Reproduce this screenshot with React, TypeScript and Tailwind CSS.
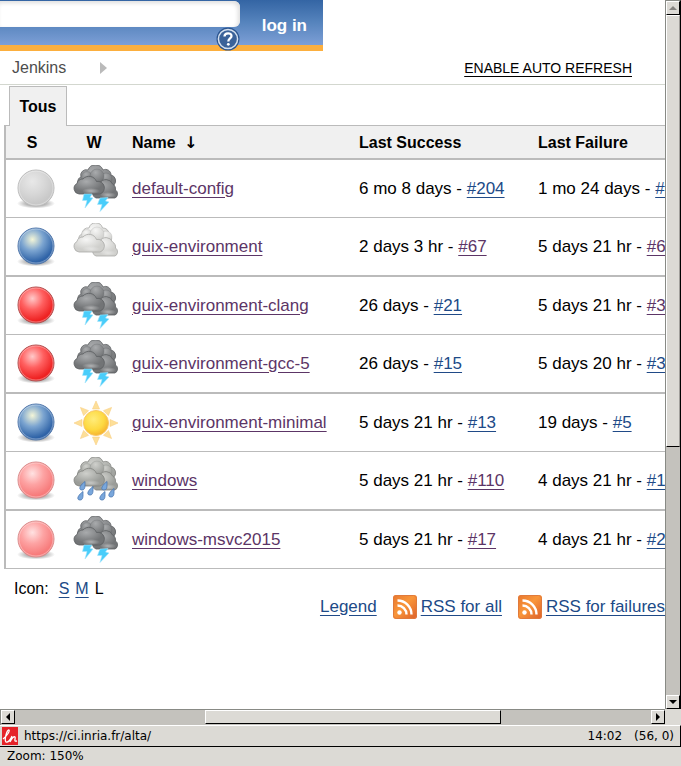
import React from "react";

type Weather = "storm" | "cloudy" | "sunny" | "rain";
type Ball = "grey" | "blue" | "red" | "pink";
type Build = { age: string; id: string; visited?: boolean };
type Job = { name: string; ball: Ball; weather: Weather; success: Build; failure: Build };

const jobs: Job[] = [
  { name: "default-config", ball: "grey", weather: "storm", success: { age: "6 mo 8 days", id: "#204" }, failure: { age: "1 mo 24 days", id: "#203" } },
  { name: "guix-environment", ball: "blue", weather: "cloudy", success: { age: "2 days 3 hr", id: "#67", visited: true }, failure: { age: "5 days 21 hr", id: "#65", visited: true } },
  { name: "guix-environment-clang", ball: "red", weather: "storm", success: { age: "26 days", id: "#21" }, failure: { age: "5 days 21 hr", id: "#39", visited: true } },
  { name: "guix-environment-gcc-5", ball: "red", weather: "storm", success: { age: "26 days", id: "#15" }, failure: { age: "5 days 20 hr", id: "#33" } },
  { name: "guix-environment-minimal", ball: "blue", weather: "sunny", success: { age: "5 days 21 hr", id: "#13" }, failure: { age: "19 days", id: "#5" } },
  { name: "windows", ball: "pink", weather: "rain", success: { age: "5 days 21 hr", id: "#110", visited: true }, failure: { age: "4 days 21 hr", id: "#111" } },
  { name: "windows-msvc2015", ball: "pink", weather: "storm", success: { age: "5 days 21 hr", id: "#17", visited: true }, failure: { age: "4 days 21 hr", id: "#20" } },
];

const ballColors: Record<Ball, [string, string, string, string]> = {
  grey: ["#e8e8e8", "#d9d9d9", "#c8c8c8", "#bcbcbc"],
  blue: ["#f4f6d8", "#7ba4d0", "#2f63a7", "#5379ac"],
  red: ["#ffc9c9", "#ff6060", "#ee2222", "#b05050"],
  pink: ["#ffe2e2", "#fda3a3", "#f77b7b", "#d98c8c"],
};

function StatusBall({ color }: { color: Ball }) {
  const [hi, mid, low, edge] = ballColors[color];
  const id = React.useId();
  return (
    <svg viewBox="0 0 48 48" className="mx-auto block size-12" role="img" aria-label={color}>
      <defs>
        <radialGradient id={id} cx="0.4" cy="0.32" r="0.62">
          <stop offset="0" stopColor={hi} />
          <stop offset="0.5" stopColor={mid} />
          <stop offset="1" stopColor={low} />
        </radialGradient>
        <radialGradient id={id + "s"}>
          <stop offset="0.4" stopColor="#000" stopOpacity="0.35" />
          <stop offset="1" stopColor="#000" stopOpacity="0" />
        </radialGradient>
      </defs>
      <ellipse cx="24" cy="38.5" rx="19" ry="5" fill={`url(#${id}s)`} />
      <circle cx="24" cy="23" r="18" fill={`url(#${id})`} stroke={edge} strokeWidth="1" />
      <circle cx="24" cy="23" r="17" fill="none" stroke="#fff" strokeOpacity="0.35" />
    </svg>
  );
}

const cloudColors = {
  storm: ["#a9abad", "#727476", "#5c5e61"],
  cloudy: ["#f6f6f5", "#cfcfcc", "#a9a9a7"],
  rain: ["#cfd0cc", "#9a9c98", "#80827e"],
};

function Clouds({ kind }: { kind: "storm" | "cloudy" | "rain" }) {
  const [hi, low, edge] = cloudColors[kind];
  const id = React.useId();
  return (
    <>
      <defs>
        <radialGradient id={id} cx="0.4" cy="0.25" r="0.75">
          <stop offset="0" stopColor={hi} />
          <stop offset="1" stopColor={low} />
        </radialGradient>
        <radialGradient id={id + "f"} cx="0.4" cy="0.3" r="0.7">
          <stop offset="0" stopColor={hi} />
          <stop offset="0.8" stopColor={low} />
          <stop offset="1" stopColor={low} />
        </radialGradient>
        <radialGradient id={id + "g"}>
          <stop offset="0" stopColor="#fff" stopOpacity="0.45" />
          <stop offset="1" stopColor="#fff" stopOpacity="0" />
        </radialGradient>
      </defs>
      <g stroke={edge} strokeWidth="0.8">
        {kind === "cloudy" ? (
          <path d="M9 20 A5 5 0 0 1 10 11 A6 6 0 0 1 17 5 A7 7 0 0 1 30.500 5 A6 6 0 0 1 37 11 A6 6 0 0 1 38 20 L36 24 H12 Z" fill={`url(#${id})`} />
        ) : (
          <path d="M8 21 A5 5 0 0 1 9 12 A5.500 5.500 0 0 1 16 5 A8 8 0 0 1 31 5 A5.500 5.500 0 0 1 39 10 A6 6 0 0 1 42 20 L40 28 H12 Z" fill={`url(#${id})`} />
        )}
        <circle cx="15" cy="12" r="5.500" fill={`url(#${id})`} strokeOpacity="0.35" />
        <circle cx="34" cy="14" r="6" fill={`url(#${id})`} strokeOpacity="0.35" />
        <circle cx="25" cy="11" r="7" fill={`url(#${id})`} strokeOpacity="0.35" />
        <path d="M24 33 A5 5 0 0 1 23 24 A6 6 0 0 1 28 18 A7 7 0 0 1 40.500 19 A6 6 0 0 1 43.500 25 A4.600 4.600 0 0 1 43 33 Z" fill={`url(#${id}f)`} />
        <path d="M7 29 A5.600 5.600 0 0 1 5 18.500 A5.500 5.500 0 0 1 11 14 A8 8 0 0 1 24.500 16.500 A6.500 6.500 0 0 1 28 29 Z" fill={`url(#${id}f)`} />
      </g>
      <ellipse cx="19" cy="26" rx="9" ry="3" fill={`url(#${id}g)`} />
      <ellipse cx="36" cy="30" rx="8" ry="3" fill={`url(#${id}g)`} />
    </>
  );
}

function WeatherIcon({ kind }: { kind: Weather }) {
  return (
    <svg viewBox="0 0 48 48" className="mx-auto block size-12" role="img" aria-label={kind}>
      {kind === "sunny" ? (
        <>
          <defs>
            <radialGradient id="sun" cx="0.4" cy="0.35" r="0.7">
              <stop offset="0" stopColor="#ffec7a" />
              <stop offset="0.6" stopColor="#fdd941" />
              <stop offset="1" stopColor="#f5ad2c" />
            </radialGradient>
          </defs>
          {[0, 45, 90, 135, 180, 225, 270, 315].map((a) => (
            <path key={a} d="M24 2 L27.500 10 H20.500 Z" fill="#fddf98" stroke="#f8cf85" strokeWidth="0.6" transform={`rotate(${a} 24 24)`} />
          ))}
          <circle cx="24" cy="24" r="12.500" fill="url(#sun)" stroke="#f9c765" />
        </>
      ) : (
        <Clouds kind={kind} />
      )}
      {kind === "storm" && (
        <g fill="#49cdfa" stroke="#a5e4fb" strokeWidth="0.6">
          <path d="M12 29 L20 29 L18 32.500 L21 33 L13 43 L15 35.500 L10.500 35.500 Z" />
          <path d="M28 33 L36 32.500 L33.500 36 L37 37 L28 46.500 L30 39.500 L25.500 39.500 Z" />
        </g>
      )}
      {kind === "rain" && (
        <g fill="#79a7dc" stroke="#4a76b0" strokeWidth="0.8">
          {[[10, 29], [18, 34], [8, 39], [32, 29], [39, 36], [30, 39]].map(([x, y]) => (
            <path key={`${x}-${y}`} d="M3 -4.500 C3 0 3.500 4 0 4 C-3.500 4 -3 0 3 -4.500 Z" transform={`translate(${x} ${y})`} />
          ))}
        </g>
      )}
    </svg>
  );
}

function RssIcon() {
  return (
    <svg viewBox="0 0 24 24" className="size-6 shrink-0" aria-hidden="true">
      <defs>
        <linearGradient id="rss" x1="0" y1="0" x2="1" y2="1">
          <stop offset="0" stopColor="#e8772e" />
          <stop offset="0.45" stopColor="#f9963a" />
          <stop offset="1" stopColor="#dc5f2a" />
        </linearGradient>
      </defs>
      <rect width="24" height="24" rx="3" fill="url(#rss)" />
      <rect x="0.5" y="0.5" width="23" height="23" rx="3" fill="none" stroke="#e07a3c" />
      <circle cx="6.500" cy="17.500" r="2.200" fill="#fff" />
      <path d="M4.500 10.500 A9 9 0 0 1 13.500 19.500 M4.500 5.500 A14 14 0 0 1 18.500 19.500" fill="none" stroke="#fff" strokeWidth="2.400" />
    </svg>
  );
}

function BuildCell({ build }: { build: Build }) {
  return (
    <td className="px-1.5 whitespace-nowrap">
      {build.age} -{" "}
      <a href="#build" className={build.visited ? "text-[#5c3566] underline underline-offset-3" : "text-[#204a87] underline underline-offset-3"}>
        {build.id}
      </a>
    </td>
  );
}

function ScrollButton({ d, label, dim }: { d: string; label: string; dim?: boolean }) {
  return (
    <button aria-label={label} className="flex size-3.5 shrink-0 items-center justify-center border border-t-white border-r-black border-b-black border-l-white bg-[#dcdad5]">
      <svg viewBox="0 0 8 8" className={dim ? "size-2 shrink-0 fill-[#858380]" : "size-2 shrink-0 fill-black"}>
        <path d={d} />
      </svg>
    </button>
  );
}

export default function App() {
  return (
    <div className="flex h-screen flex-col bg-white font-['Liberation_Sans',Arial,sans-serif] text-base text-black">
      <div className="flex min-h-0 flex-1">
        <main className="min-w-0 flex-1 overflow-hidden">
          <header className="flex h-[51px] w-[323px] justify-between border-b-6 border-[#fcaf3e] bg-linear-to-b from-[#3465a4] via-[#5684bd] to-[#7d9fd6]">
            <div className="flex w-60 flex-col items-end">
              <input aria-label="Search" className="mt-px h-[26px] w-full shrink-0 rounded-r-md bg-white shadow-[inset_-2px_2px_4px_#ddd] outline-none" />
              <button aria-label="Help" className="shrink-0">
                <svg viewBox="0 0 24 24" className="block size-6">
                  <circle cx="12" cy="12" r="11.500" fill="#2b5590" />
                  <circle cx="12" cy="12" r="9.600" fill="#3b6299" stroke="#d5e0ee" strokeWidth="1.500" />
                  <path d="M8.500 9.500 C8.500 5.300 15.500 5.300 15.500 9 C15.500 11.500 12.300 11.500 12.300 14.500" fill="none" stroke="#fff" strokeWidth="2.300" />
                  <circle cx="12.300" cy="17.300" r="1.400" fill="#fff" />
                </svg>
              </button>
            </div>
            <a href="#login" className="mt-3 mr-4 text-[17px]/[28px] font-bold text-white">log in</a>
          </header>

          <nav className="flex h-[34px] items-center border-b border-[#d3d7cf] pr-[33px] pl-3">
            <a href="#jenkins" className="text-[#4d4d4d]">Jenkins</a>
            <svg viewBox="0 0 7 12" className="ml-[34px] h-3 w-[7px] fill-[#bababa]" aria-hidden="true">
              <path d="M0 0 L7 6 L0 12 Z" />
            </svg>
            <a href="#refresh" className="ml-auto text-sm underline underline-offset-3">ENABLE AUTO REFRESH</a>
          </nav>

          <div className="pt-px pl-[9px]">
            <a href="#tous" className="relative -mb-px block h-10 w-[58px] border border-b-0 border-[#bbb] bg-[#f0f0f0] text-center leading-10 font-bold">
              Tous
            </a>
          </div>

          <table className="ml-1 w-[760px] table-fixed border-separate border-spacing-0 border-t border-l-2 border-[#bbb] text-left">
            <colgroup>
              <col className="w-[60px]" />
              <col className="w-[60px]" />
              <col className="w-[227px]" />
              <col className="w-[179px]" />
              <col />
            </colgroup>
            <thead>
              <tr className="h-[34px] bg-[#f0f0f0] [&>th]:border-b-2 [&>th]:border-[#bbb] [&>th]:pt-0.5">
                <th className="pr-2 text-center">S</th>
                <th className="pr-1 text-center">W</th>
                <th className="px-1.5">
                  Name <span className="ml-1 font-['DejaVu_Sans',sans-serif] leading-4">↓</span>
                </th>
                <th className="px-1.5">Last Success</th>
                <th className="px-1.5">Last Failure</th>
              </tr>
            </thead>
            <tbody className="text-[17px]/[24px]">
              {jobs.map((job) => (
                <tr key={job.name} className="h-[58px] even:h-[59px] [&>td]:border-b [&>td]:border-[#bbb] even:[&>td]:border-b-2">
                  <td><StatusBall color={job.ball} /></td>
                  <td><WeatherIcon kind={job.weather} /></td>
                  <td className="px-1.5 whitespace-nowrap">
                    <a href="#job" className="text-[#5c3566] underline underline-offset-3">{job.name}</a>
                  </td>
                  <BuildCell build={job.success} />
                  <BuildCell build={job.failure} />
                </tr>
              ))}
            </tbody>
          </table>

          <footer className="flex items-start justify-between pt-2 pl-3.5 whitespace-nowrap text-[#204a87]">
            <div className="flex gap-1.5 text-black">
              <span className="mr-1">Icon:</span>
              <a href="#s" className="text-[#204a87] underline underline-offset-3">S</a>
              <a href="#m" className="text-[#204a87] underline underline-offset-3">M</a>
              <span>L</span>
            </div>
            <div className="mt-[18px] flex items-center text-[17px]/[24px]">
              <a href="#legend" className="mr-4 underline underline-offset-3">Legend</a>
              <RssIcon />
              <a href="#all" className="mr-4 ml-1 underline underline-offset-3">RSS for all</a>
              <RssIcon />
              <a href="#failures" className="ml-1 underline underline-offset-3">RSS for failures</a>
            </div>
          </footer>
        </main>
        <div className="flex w-4 flex-col border-t border-r border-l border-t-[#888a85] border-r-black border-l-[#888a85] bg-[#c4c2bd]">
          <ScrollButton label="Scroll up" d="M4 2 L8 6 H0 Z" dim />
          <div className="h-[432px] w-full border border-t-white border-r-[#a09e9a] border-b-black border-l-white bg-[#dcdad5]" />
          <div className="flex-1" />
          <ScrollButton label="Scroll down" d="M0 2 H8 L4 6 Z" />
        </div>
      </div>

      <div className="flex h-4 bg-[#dcdad5]">
        <div className="flex flex-1 border-t border-l border-[#888a85] bg-[#c4c2bd]">
          <ScrollButton label="Scroll left" d="M6 0 V8 L2 4 Z" />
          <div className="w-[190px]" />
          <div className="h-3.5 w-[296px] border border-t-white border-r-black border-b-black border-l-white bg-[#dcdad5]" />
          <div className="flex-1" />
          <ScrollButton label="Scroll right" d="M2 0 L6 4 L2 8 Z" />
        </div>
        <div className="w-4" />
      </div>

      <div className="flex h-[22px] items-center border-t border-r border-b border-t-white border-r-black border-b-black bg-[#dcdad5] pr-1.5 pl-0.5 font-['DejaVu_Sans',sans-serif] text-xs">
        <svg viewBox="0 0 16 18" className="mr-1.5 h-[18px] w-4" aria-hidden="true">
          <rect width="16" height="18" fill="#e52329" />
          <path d="M1 12 C5 9 8 4 7 3 C5 2 2 13 4 15 C6 16 9 12 10 9 L8 15 C10 11 12 9 13 10 C14 11 11 15 15 14" fill="none" stroke="#fff" strokeWidth="1.300" />
        </svg>
        <span className="flex-1">https://ci.inria.fr/alta/</span>
        <span className="mr-3">14:02</span>
        <span>(56, 0)</span>
      </div>
      <div className="h-[19px] bg-[#dcdad5] pl-[7px] font-['DejaVu_Sans',sans-serif] text-xs/[19px]">Zoom: 150%</div>
    </div>
  );
}
